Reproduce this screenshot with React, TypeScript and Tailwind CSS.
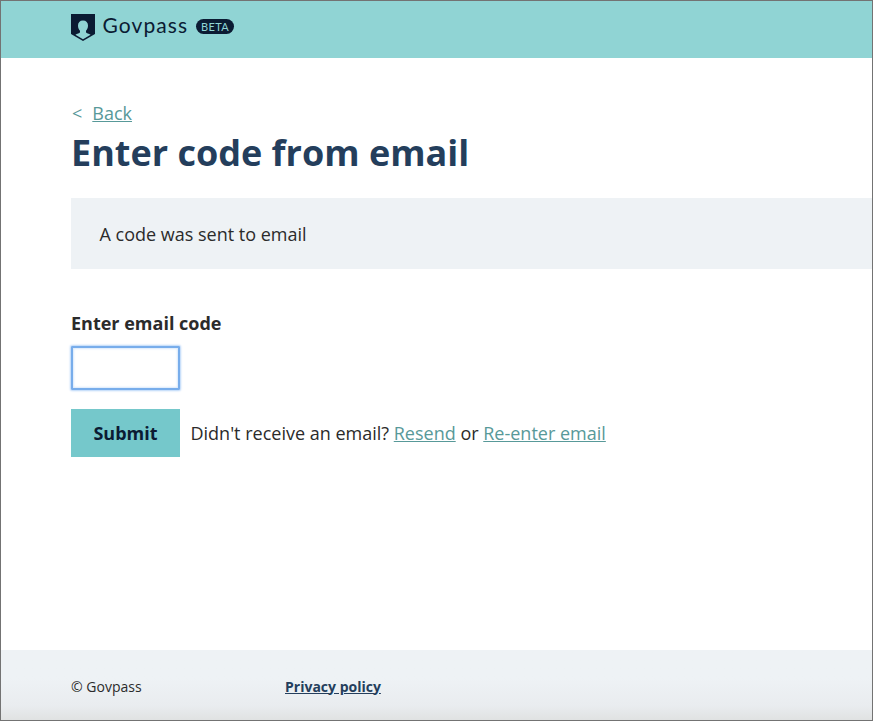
export default function App() {
  return (
    <div className="flex h-[721px] w-[873px] flex-col overflow-hidden border border-[#737373] bg-white font-['Open_Sans',sans-serif] text-[18px] leading-[27px] text-[#2b2b2b]">
      <header className="flex h-[57px] shrink-0 items-start bg-[#90d4d4] pl-[70px] text-[#0b1b33]">
        <svg className="mt-[13px] h-[27px] w-[24px]" viewBox="0 0 24 27">
          <path fill="currentColor" d="M0 0h24v20L12 27 0 20z" />
          <path fill="#90d4d4" d="M12 6.500c3.200 0 5 2 5 5 0 2.300-.8 4.200-2 5.300v1.500c.3 1.300 3 1.200 4.600 2.400L12 25.200 4.400 20.700C6 19.500 8.700 19.600 9 18.300v-1.500c-1.200-1.100-2-3-2-5.300 0-3 1.800-5 5-5z" />
        </svg>
        <span className="mt-[10px] ml-[7.500px] w-[86.500px] whitespace-nowrap font-['Lato',sans-serif] text-[21px] tracking-[1.1px]">Govpass</span>
        <span className="mt-[18px] ml-[7px] flex h-[15px] w-[38px] items-center justify-center rounded-full bg-[#0b1b33] font-['Lato',sans-serif] text-[11px] tracking-[0.4px] text-[#90d4d4]">BETA</span>
      </header>
      <main className="flex grow flex-col pl-[70px]">
        <div className="mt-[42px] flex gap-[10px] pl-px text-[#589999]">
          <span>&lt;</span>
          <a className="underline">Back</a>
        </div>
        <h1 className="mt-px text-[36px] leading-[50px] font-bold text-[#243e5c]">Enter code from email</h1>
        <div className="mt-[20px] flex h-[71px] items-center bg-[#eef2f5] pt-px pl-[28.500px]">A code was sent to email</div>
        <label className="mt-[41px] font-bold">Enter email code</label>
        <input className="mt-[9px] h-[44px] w-[109px] rounded-[1px] border-2 border-[#78adeb] shadow-[0_0_2px_1px_#b8d5f8,inset_0_0_2px_1px_#d8e8fb] outline-none" />
        <div className="mt-[19px] flex items-center">
          <button className="h-[48px] w-[109px] bg-[#75c8cb] font-bold text-[#0b1b33]">Submit</button>
          <p className="ml-[10.500px] whitespace-nowrap">Didn't receive an email? <a className="text-[#589999] underline">Resend</a> or <a className="text-[#589999] underline">Re-enter email</a></p>
        </div>
      </main>
      <footer className="flex h-[70px] shrink-0 items-center bg-gradient-to-b from-[#eef2f5] from-40% via-[#e9ecef] via-80% to-[#e0e2e2] pt-[2px] pl-[70px] text-[14px]">
        <span className="w-[214px]">© Govpass</span>
        <a className="font-bold text-[#243e5c] underline">Privacy policy</a>
      </footer>
    </div>
  );
}
